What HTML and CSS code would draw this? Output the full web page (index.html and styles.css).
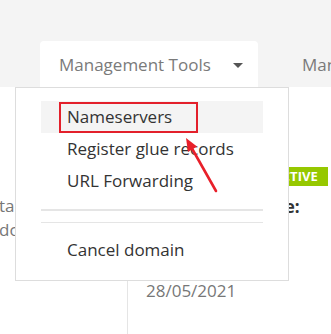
FILE: index.html
```html
<!DOCTYPE html>
<html>
<head>
<meta charset="utf-8">
<link rel="stylesheet" href="styles.css">
</head>
<body>
<div class="page">
  <header class="tabs-bar">
    <div class="tab tab-active">Management Tools<span class="caret"></span></div>
    <div class="tab tab-next">Manage</div>
  </header>
  <main class="content">
    <div class="col-left">
      <p class="line">ta</p>
      <p class="line">do</p>
    </div>
    <div class="col-right">
      <span class="badge">ACTIVE</span>
      <p class="label-bold">Registration Date:</p>
      <p class="value">28/05/2021</p>
    </div>
  </main>
  <nav class="dropdown">
    <a class="item item-hover">Nameservers</a>
    <a class="item">Register glue records</a>
    <a class="item">URL Forwarding</a>
    <div class="divider divider-thick"></div>
    <div class="divider divider-thin"></div>
    <a class="item item-cancel">Cancel domain</a>
  </nav>
  <div class="highlight-box"></div>
  <svg class="arrow" width="331" height="334" viewBox="0 0 331 334">
    <line x1="216" y1="191" x2="192" y2="148.5" stroke="#e8202a" stroke-width="2.6" stroke-linecap="round"/>
    <polygon points="186,138 197,146.6 188,151.9" fill="#e8202a"/>
  </svg>
</div>
</body>
</html>
```
FILE: styles.css
```css
html, body {
  margin: 0;
  padding: 0;
  background: #ffffff;
}

.page {
  position: relative;
  width: 331px;
  height: 334px;
  overflow: hidden;
  font-family: "Open Sans", "Liberation Sans", sans-serif;
  font-size: 17px;
}

.tabs-bar {
  height: 87px;
  background: #f4f4f4;
  display: flex;
  align-items: flex-end;
  padding-left: 40px;
  box-sizing: border-box;
}

.tab {
  flex: none;
  height: 46px;
  box-sizing: border-box;
  padding: 2px 0 0 19px;
  line-height: 44px;
  color: #7a7a7a;
  display: flex;
  align-items: center;
  white-space: nowrap;
}

.tab-active {
  width: 218px;
  background: #ffffff;
  border-radius: 4px 4px 0 0;
}

.tab-next {
  margin-left: 25px;
}

.caret {
  width: 0;
  height: 0;
  margin-left: 22px;
  border-left: 5px solid transparent;
  border-right: 5px solid transparent;
  border-top: 5px solid #555555;
}

.content {
  display: flex;
  height: 247px;
}

.col-left {
  width: 127px;
  flex: none;
  border-right: 1px solid #e5e5e5;
  padding-top: 107px;
  color: #777777;
}

.line {
  margin: 0 0 0 -1px;
  line-height: 24px;
}

.col-right {
  flex: 1;
  display: flex;
  flex-direction: column;
  padding: 80px 6px 0 18px;
  color: #777777;
}

.badge {
  align-self: flex-end;
  height: 19px;
  line-height: 19px;
  padding: 0 10px 0 8px;
  background: #96c800;
  color: #ffffff;
  font-size: 13px;
  font-weight: 700;
}

.label-bold {
  margin: 9px 28px 0 0;
  line-height: 24px;
  text-align: right;
  font-weight: 700;
  color: #333333;
  white-space: nowrap;
}

.value {
  margin: 60px 0 0 0;
  line-height: 24px;
}

.dropdown {
  position: absolute;
  top: 87px;
  left: 15px;
  width: 274px;
  height: 194px;
  box-sizing: border-box;
  border: 1px solid #dddddd;
  background: #ffffff;
  padding: 13px 25px;
  display: flex;
  flex-direction: column;
}

.item {
  display: block;
  height: 32px;
  line-height: 32px;
  padding-left: 26px;
  color: #333333;
  white-space: nowrap;
}

.item-hover {
  background: #f4f4f4;
}

.divider {
  background: #e5e5e5;
}

.divider-thick {
  height: 2px;
  margin-top: 12px;
}

.divider-thin {
  height: 1px;
  margin-top: 11px;
}

.item-cancel {
  margin-top: 11px;
}

.highlight-box {
  position: absolute;
  left: 59px;
  top: 102px;
  width: 139px;
  height: 31px;
  box-sizing: border-box;
  border: 2px solid #e3202b;
}

.arrow {
  position: absolute;
  left: 0;
  top: 0;
}
```
